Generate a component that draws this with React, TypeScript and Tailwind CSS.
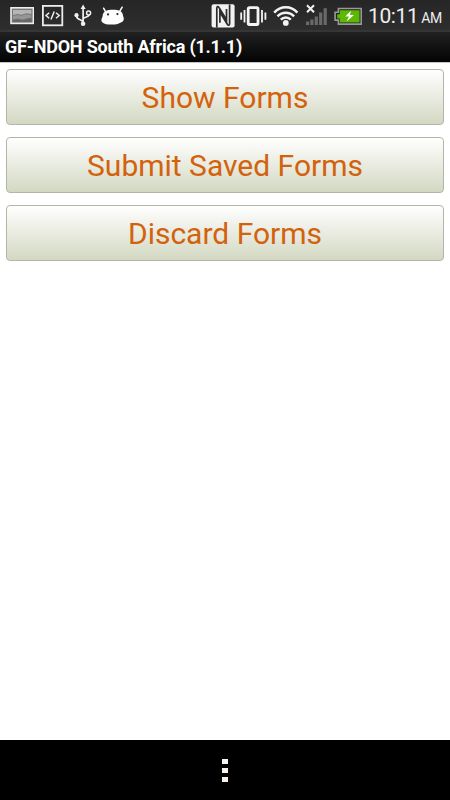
import React from "react";

const PictureIcon: React.FC = () => (
  <svg width="24" height="30" viewBox="10 0 24 30" fill="none">
    <rect x="11" y="7.8" width="22.4" height="15.6" fill="#777" stroke="#ededed" strokeWidth="1.6" />
    <path d="M13 10h18.4v4l-5-.8-5 1.6-4-.8-4.4 1z" fill="#b5b5b5" />
    <path d="M13 16l4.4-1 4 .8 5-1.6 5 1v2.2l-5 .8-4 1.2-5-1-4.4.8z" fill="#969696" />
    <path d="M13 20.4l5-1 5 1 8.4-2v3.4H13z" fill="#666" />
  </svg>
);

const CodeIcon: React.FC = () => (
  <svg width="22" height="30" viewBox="42 0 22 30" fill="none" stroke="#ececec">
    <rect x="42.9" y="5.9" width="19.4" height="19.4" strokeWidth="1.8" />
    <path d="M49.2 12.7l-3.2 2.8 3.2 2.8M56 12.7l3.2 2.8-3.2 2.8M54.2 11.5l-3.2 8" strokeWidth="1.5" />
  </svg>
);

const UsbIcon: React.FC = () => (
  <svg width="18" height="30" viewBox="74 0 18 30" fill="none" stroke="#f0f0f0" strokeWidth="1.7">
    <path d="M83.1 8v15M83.1 22.4c0-3.4-6.3-2-6.5-6M83.1 19.4c0-2.8 5.2-1.4 6.2-4.6" />
    <path d="M83.1 4.6l2.5 4.4h-5z" fill="#f0f0f0" stroke="none" />
    <circle cx="76.5" cy="15.2" r="2.1" fill="#f0f0f0" stroke="none" />
    <circle cx="88.6" cy="13" r="2" strokeWidth="1.5" />
    <circle cx="83.1" cy="23.7" r="2.3" fill="#f0f0f0" stroke="none" />
  </svg>
);

const AndroidIcon: React.FC = () => (
  <svg width="24" height="30" viewBox="101 0 24 30">
    <path
      d="M103.6 8.2l2.2 4M122.2 7.2l-2.4 4"
      stroke="#fff"
      strokeWidth="1.5"
      strokeLinecap="round"
    />
    <path
      d="M105 11.4c2.2-1.2 4.8-1.6 7.8-1.6s5.6.3 7.8 1.4c1.8 1 2.2 2.8 2.4 4.6.4 1.2 1.2 2.6.6 4.2-.7 1.8-2.4 2.3-3.8 3-2 1.1-4.4 1.6-7.2 1.6-3.2 0-6-.1-8.4-1.2-2.2-1-3.2-2.2-2.7-4.2.2-1.2 1-1.8 1.1-3 .1-2 .6-3.8 2.4-4.8z"
      fill="#fff"
    />
    <circle cx="108" cy="14.4" r="1.1" fill="#2b2b2b" />
    <circle cx="117.4" cy="14.1" r="1.1" fill="#2b2b2b" />
  </svg>
);

const NfcIcon: React.FC = () => (
  <svg width="24" height="30" viewBox="211 0 24 30">
    <rect x="211.6" y="4.2" width="23" height="23.4" rx="2" fill="#f2f2f2" />
    <path
      d="M216.8 27.4V8.4c0-2.2 1.5-2.4 2.3-.8l7.4 12.2V9M229.6 4.4v19c0 2.2-1.5 2.4-2.3.8l-7.4-12.2v10.8"
      fill="none"
      stroke="#2b2b2b"
      strokeWidth="1.7"
    />
  </svg>
);

const VibrateIcon: React.FC = () => (
  <svg width="28" height="30" viewBox="240 0 28 30" fill="none" stroke="#f4f4f4" strokeWidth="1.8">
    <rect x="248.2" y="7.7" width="9.8" height="16.8" rx="1.2" strokeWidth="2.8" />
    <path d="M244.5 10v12.5M241.2 12.4v7.4M262 10v12.5M265.4 12.4v7.4" />
  </svg>
);

const WifiIcon: React.FC = () => (
  <svg width="26" height="30" viewBox="273 0 26 30" fill="none" stroke="#f2f2f2" strokeWidth="2.5">
    <path d="M274.2 12.7c6.4-7.2 16.8-7.2 23.2 0" />
    <path d="M277.5 16.3c4.6-4.9 12-4.9 16.6 0" />
    <path d="M280.8 19.6c2.8-2.9 7.2-2.9 10 0" />
    <circle cx="285.8" cy="22.9" r="2.9" fill="#f2f2f2" stroke="none" />
  </svg>
);

const SignalIcon: React.FC = () => (
  <svg width="22" height="30" viewBox="305 0 22 30">
    <path d="M307 5.3l7 7M314 5.3l-7 7" stroke="#f2f2f2" strokeWidth="2" />
    <path
      d="M306 21.4h3.2v3.6h-3.2zM310.3 19.5h3.2V25h-3.2zM314.7 16.5h3.2V25h-3.2zM319.1 12.6h3.2V25h-3.2zM323.6 8.2h3.2V25h-3.2z"
      fill="#696969"
    />
  </svg>
);

const BatteryIcon: React.FC = () => (
  <svg width="29" height="30" viewBox="334 0 29 30">
    <path
      d="M338.4 8.5h22.8v15.6h-22.8v-4h-3.3v-7.8h3.3z"
      fill="#222"
      stroke="#999"
      strokeWidth="1.6"
    />
    <path d="M339.8 10.2h19.8v12.4h-19.8v-4h-2.6v-4.4h2.6z" fill="#5cb800" />
    <path d="M350.9 10.8l-5.6 5.6h3.6l-2.3 5.2 7.4-6.7h-4z" fill="#fff" />
  </svg>
);

const StatusBar: React.FC = () => (
  <div className="flex h-[30px] shrink-0 bg-gradient-to-b from-[#262626] to-[#2e2e2e] pl-2.5">
    <div className="flex w-[201px] shrink-0">
      <PictureIcon />
      <div className="ml-2">
        <CodeIcon />
      </div>
      <div className="ml-2.5">
        <UsbIcon />
      </div>
      <div className="ml-[9px]">
        <AndroidIcon />
      </div>
    </div>
    <NfcIcon />
    <div className="ml-[5px]">
      <VibrateIcon />
    </div>
    <div className="ml-[5px]">
      <WifiIcon />
    </div>
    <div className="ml-1.5">
      <SignalIcon />
    </div>
    <div className="ml-[7px]">
      <BatteryIcon />
    </div>
    <div className="ml-[5px] flex items-baseline whitespace-nowrap pt-[3px] text-[#ededed]">
      <span className="text-[21px] leading-[26px] tracking-[-0.4px]">10:11</span>
      <span className="ml-[3px] text-[14px] tracking-[-0.4px]">AM</span>
    </div>
  </div>
);

const FormButton: React.FC<{ label: string }> = ({ label }) => (
  <button className="h-14 w-full rounded-[4px] border border-[#b3b5a9] bg-gradient-to-b from-white to-[#d3d8c2] pt-px text-center text-[30px] leading-[54px] text-[#d3620c]">
    {label}
  </button>
);

const actions = ["Show Forms", "Submit Saved Forms", "Discard Forms"];

export default function App() {
  return (
    <div className="flex h-[800px] w-[450px] flex-col overflow-hidden bg-white font-['Roboto',sans-serif]">
      <StatusBar />
      <header className="h-8 shrink-0 border-t-2 border-[#363636] bg-gradient-to-b from-[#212121] to-[#050505] pl-[5px]">
        <h1 className="whitespace-nowrap text-[18px] font-bold leading-[30px] tracking-[-0.2px] text-white">
          GF-NDOH South Africa (1.1.1)
        </h1>
      </header>

      <main className="flex flex-1 flex-col gap-3 border-t border-[#c4c4c4] px-1.5 pt-1.5">
        {actions.map((label) => (
          <FormButton key={label} label={label} />
        ))}
      </main>

      {/* Navigation bar with overflow menu */}
      <footer className="flex h-[60px] shrink-0 flex-col items-center justify-center gap-1 bg-black">
        <span className="h-[5px] w-1.5 bg-[#f8f2ec]" />
        <span className="h-[5px] w-1.5 bg-[#f8f2ec]" />
        <span className="h-[5px] w-1.5 bg-[#f8f2ec]" />
      </footer>
    </div>
  );
}
